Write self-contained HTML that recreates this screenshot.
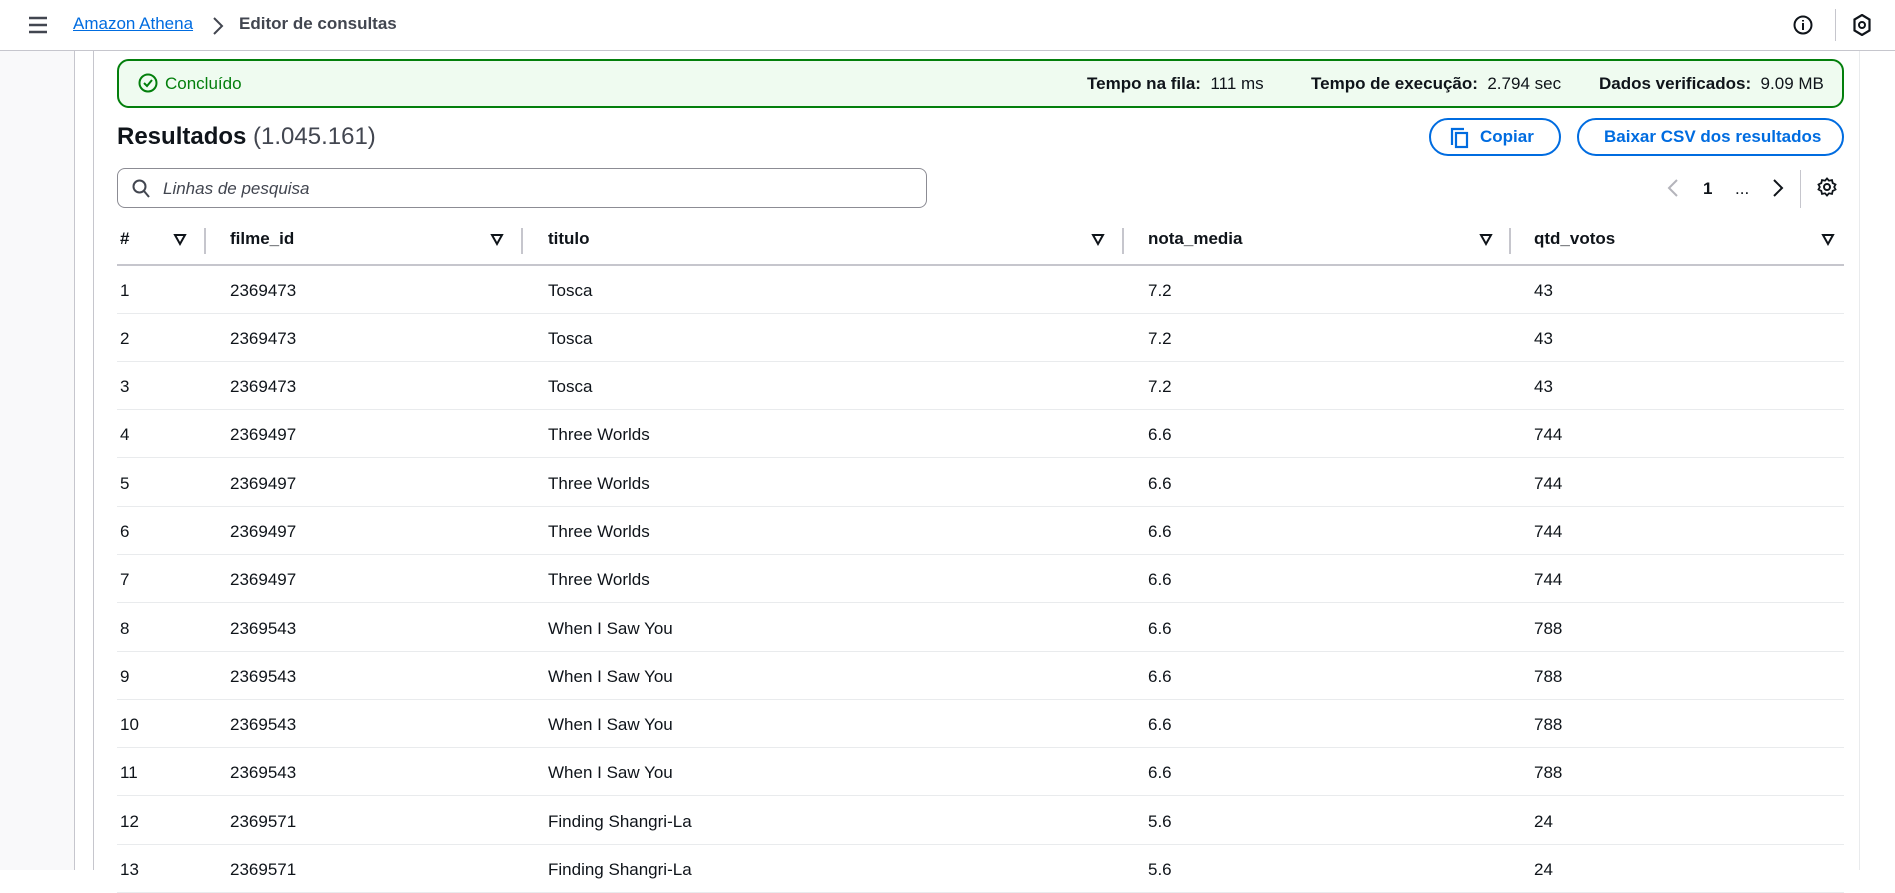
<!DOCTYPE html>
<html><head><meta charset="utf-8"><style>
*{box-sizing:border-box;margin:0;padding:0}
body{width:1895px;height:870px;overflow:hidden;background:#fff;font-family:"Liberation Sans",sans-serif;color:#0f141a;font-size:17px;position:relative}
.a{position:absolute}
.hdr{left:0;top:0;width:1895px;height:51px;border-bottom:1px solid #c6c6cd;background:#fff}
.t{white-space:nowrap}
.row{position:absolute;left:117px;width:1727px;height:48px;border-bottom:1px solid #e9ebed}
.row span{position:absolute;top:15px;white-space:nowrap}
.th{position:absolute;font-weight:bold;top:229px;white-space:nowrap}
.sep{position:absolute;top:228px;width:2px;height:26px;background:#c6c6cd}
.flt{position:absolute;top:233px}
</style></head><body>
<div class="a" style="left:0;top:51px;width:75px;height:819px;background:#f9f9fa;border-right:1px solid #c6c6cd"></div>
<div class="a" style="left:93px;top:51px;width:1px;height:819px;background:#c6c6cd"></div>
<div class="a" style="left:1859px;top:51px;width:1px;height:819px;background:#e9ebed"></div>
<div class="a hdr"></div>
<svg class="a" style="left:28px;top:16px" width="20" height="18"><path d="M1 2h18M1 9h18M1 16h18" stroke="#424650" stroke-width="2.4"/></svg>
<div class="a t" style="left:73px;top:14px;color:#006ce0;text-decoration:underline;font-size:17px">Amazon Athena</div>
<svg class="a" style="left:212px;top:17px" width="12" height="18"><path d="M2 1l8 8-8 8" stroke="#424650" stroke-width="2" fill="none"/></svg>
<div class="a t" style="left:239px;top:14px;font-weight:bold;color:#424650;font-size:17px">Editor de consultas</div>
<svg class="a" style="left:1793px;top:15px" width="20" height="20"><circle cx="10" cy="10" r="8.5" stroke="#0f141a" stroke-width="2" fill="none"/><path d="M10 8v7M10 5v1.5" stroke="#0f141a" stroke-width="2"/></svg>
<div class="a" style="left:1835px;top:9px;width:1px;height:32px;background:#c6c6cd"></div>
<svg class="a" style="left:1853px;top:14px" width="18" height="22"><path d="M9 1l7.5 4.5v11L9 21 1.5 16.5v-11z" stroke="#0f141a" stroke-width="2.2" fill="none"/><circle cx="9" cy="11" r="3" stroke="#0f141a" stroke-width="2" fill="none"/></svg>

<div class="a" style="left:117px;top:59px;width:1727px;height:49px;border:2px solid #037f0c;border-radius:12px;background:#effbf0"></div>
<svg class="a" style="left:138px;top:73px" width="20" height="20"><circle cx="10" cy="10" r="8.5" stroke="#037f0c" stroke-width="2" fill="none"/><path d="M6 10l3 3 5-6" stroke="#037f0c" stroke-width="2" fill="none"/></svg>
<div class="a t" style="left:165px;top:74px;color:#037f0c">Concluído</div>
<div class="a t" style="left:1087px;top:74px"><b>Tempo na fila:</b>&nbsp; 111 ms</div>
<div class="a t" style="left:1311px;top:74px"><b>Tempo de execução:</b>&nbsp; 2.794 sec</div>
<div class="a t" style="left:1599px;top:74px"><b>Dados verificados:</b>&nbsp; 9.09 MB</div>

<div class="a t" style="left:117px;top:123px;font-size:24px;font-weight:bold">Resultados <span style="font-weight:normal;color:#424650">(1.045.161)</span></div>
<div class="a" style="left:1429px;top:118px;width:132px;height:38px;border:2px solid #006ce0;border-radius:20px"></div>
<svg class="a" style="left:1450px;top:127px" width="20" height="22"><path d="M2 18V2h12" stroke="#006ce0" stroke-width="2.2" fill="none"/><rect x="6" y="6" width="11" height="14" stroke="#006ce0" stroke-width="2.2" fill="none"/></svg>
<div class="a t" style="left:1480px;top:127px;color:#006ce0;font-weight:bold">Copiar</div>
<div class="a" style="left:1577px;top:118px;width:267px;height:38px;border:2px solid #006ce0;border-radius:20px"></div>
<div class="a t" style="left:1604px;top:127px;color:#006ce0;font-weight:bold">Baixar CSV dos resultados</div>

<div class="a" style="left:117px;top:168px;width:810px;height:40px;border:1px solid #8c8c94;border-radius:8px"></div>
<svg class="a" style="left:132px;top:179px" width="18" height="20"><circle cx="7.5" cy="7.5" r="6" stroke="#424650" stroke-width="2" fill="none"/><path d="M12 12l5 6" stroke="#424650" stroke-width="2"/></svg>
<div class="a t" style="left:163px;top:179px;font-style:italic;color:#424650">Linhas de pesquisa</div>

<svg class="a" style="left:1667px;top:179px" width="12" height="18"><path d="M10 1L2 9l8 8" stroke="#b4b4bb" stroke-width="2" fill="none"/></svg>
<div class="a t" style="left:1703px;top:179px;font-weight:bold">1</div>
<div class="a t" style="left:1735px;top:179px">...</div>
<svg class="a" style="left:1772px;top:179px" width="12" height="18"><path d="M2 1l8 8-8 8" stroke="#0f141a" stroke-width="2" fill="none"/></svg>
<div class="a" style="left:1800px;top:170px;width:1px;height:38px;background:#c6c6cd"></div>
<svg class="a" style="left:1817px;top:177px" width="20" height="20"><circle cx="10" cy="10" r="3" stroke="#0f141a" stroke-width="2" fill="none"/><path d="M10 1.5l2 2.2 3-.6.7 3 2.8 1.4-1.3 2.5 1.3 2.5-2.8 1.4-.7 3-3-.6-2 2.2-2-2.2-3 .6-.7-3L1.5 12.5 2.8 10 1.5 7.5l2.8-1.4.7-3 3 .6z" stroke="#0f141a" stroke-width="1.8" fill="none"/></svg>

<div class="th" style="left:120px">#</div>
<div class="th" style="left:230px">filme_id</div>
<div class="th" style="left:548px">titulo</div>
<div class="th" style="left:1148px">nota_media</div>
<div class="th" style="left:1534px">qtd_votos</div>
<svg class="flt" style="left:173px" width="14" height="14"><path d="M2 2h10L7 11z" stroke="#0f141a" stroke-width="2" fill="none"/></svg>
<svg class="flt" style="left:490px" width="14" height="14"><path d="M2 2h10L7 11z" stroke="#0f141a" stroke-width="2" fill="none"/></svg>
<svg class="flt" style="left:1091px" width="14" height="14"><path d="M2 2h10L7 11z" stroke="#0f141a" stroke-width="2" fill="none"/></svg>
<svg class="flt" style="left:1479px" width="14" height="14"><path d="M2 2h10L7 11z" stroke="#0f141a" stroke-width="2" fill="none"/></svg>
<svg class="flt" style="left:1821px" width="14" height="14"><path d="M2 2h10L7 11z" stroke="#0f141a" stroke-width="2" fill="none"/></svg>
<div class="sep" style="left:204px"></div>
<div class="sep" style="left:521px"></div>
<div class="sep" style="left:1122px"></div>
<div class="sep" style="left:1509px"></div>
<div class="a" style="left:117px;top:264px;width:1727px;height:2px;background:#c6c6cd"></div>

<div class="row" style="top:266px"><span style="left:3px">1</span><span style="left:113px">2369473</span><span style="left:431px">Tosca</span><span style="left:1031px">7.2</span><span style="left:1417px">43</span></div>
<div class="row" style="top:314px"><span style="left:3px">2</span><span style="left:113px">2369473</span><span style="left:431px">Tosca</span><span style="left:1031px">7.2</span><span style="left:1417px">43</span></div>
<div class="row" style="top:362px"><span style="left:3px">3</span><span style="left:113px">2369473</span><span style="left:431px">Tosca</span><span style="left:1031px">7.2</span><span style="left:1417px">43</span></div>
<div class="row" style="top:410px"><span style="left:3px">4</span><span style="left:113px">2369497</span><span style="left:431px">Three Worlds</span><span style="left:1031px">6.6</span><span style="left:1417px">744</span></div>
<div class="row" style="top:459px"><span style="left:3px">5</span><span style="left:113px">2369497</span><span style="left:431px">Three Worlds</span><span style="left:1031px">6.6</span><span style="left:1417px">744</span></div>
<div class="row" style="top:507px"><span style="left:3px">6</span><span style="left:113px">2369497</span><span style="left:431px">Three Worlds</span><span style="left:1031px">6.6</span><span style="left:1417px">744</span></div>
<div class="row" style="top:555px"><span style="left:3px">7</span><span style="left:113px">2369497</span><span style="left:431px">Three Worlds</span><span style="left:1031px">6.6</span><span style="left:1417px">744</span></div>
<div class="row" style="top:604px"><span style="left:3px">8</span><span style="left:113px">2369543</span><span style="left:431px">When I Saw You</span><span style="left:1031px">6.6</span><span style="left:1417px">788</span></div>
<div class="row" style="top:652px"><span style="left:3px">9</span><span style="left:113px">2369543</span><span style="left:431px">When I Saw You</span><span style="left:1031px">6.6</span><span style="left:1417px">788</span></div>
<div class="row" style="top:700px"><span style="left:3px">10</span><span style="left:113px">2369543</span><span style="left:431px">When I Saw You</span><span style="left:1031px">6.6</span><span style="left:1417px">788</span></div>
<div class="row" style="top:748px"><span style="left:3px">11</span><span style="left:113px">2369543</span><span style="left:431px">When I Saw You</span><span style="left:1031px">6.6</span><span style="left:1417px">788</span></div>
<div class="row" style="top:797px"><span style="left:3px">12</span><span style="left:113px">2369571</span><span style="left:431px">Finding Shangri-La</span><span style="left:1031px">5.6</span><span style="left:1417px">24</span></div>
<div class="row" style="top:845px"><span style="left:3px">13</span><span style="left:113px">2369571</span><span style="left:431px">Finding Shangri-La</span><span style="left:1031px">5.6</span><span style="left:1417px">24</span></div>
</body></html>
